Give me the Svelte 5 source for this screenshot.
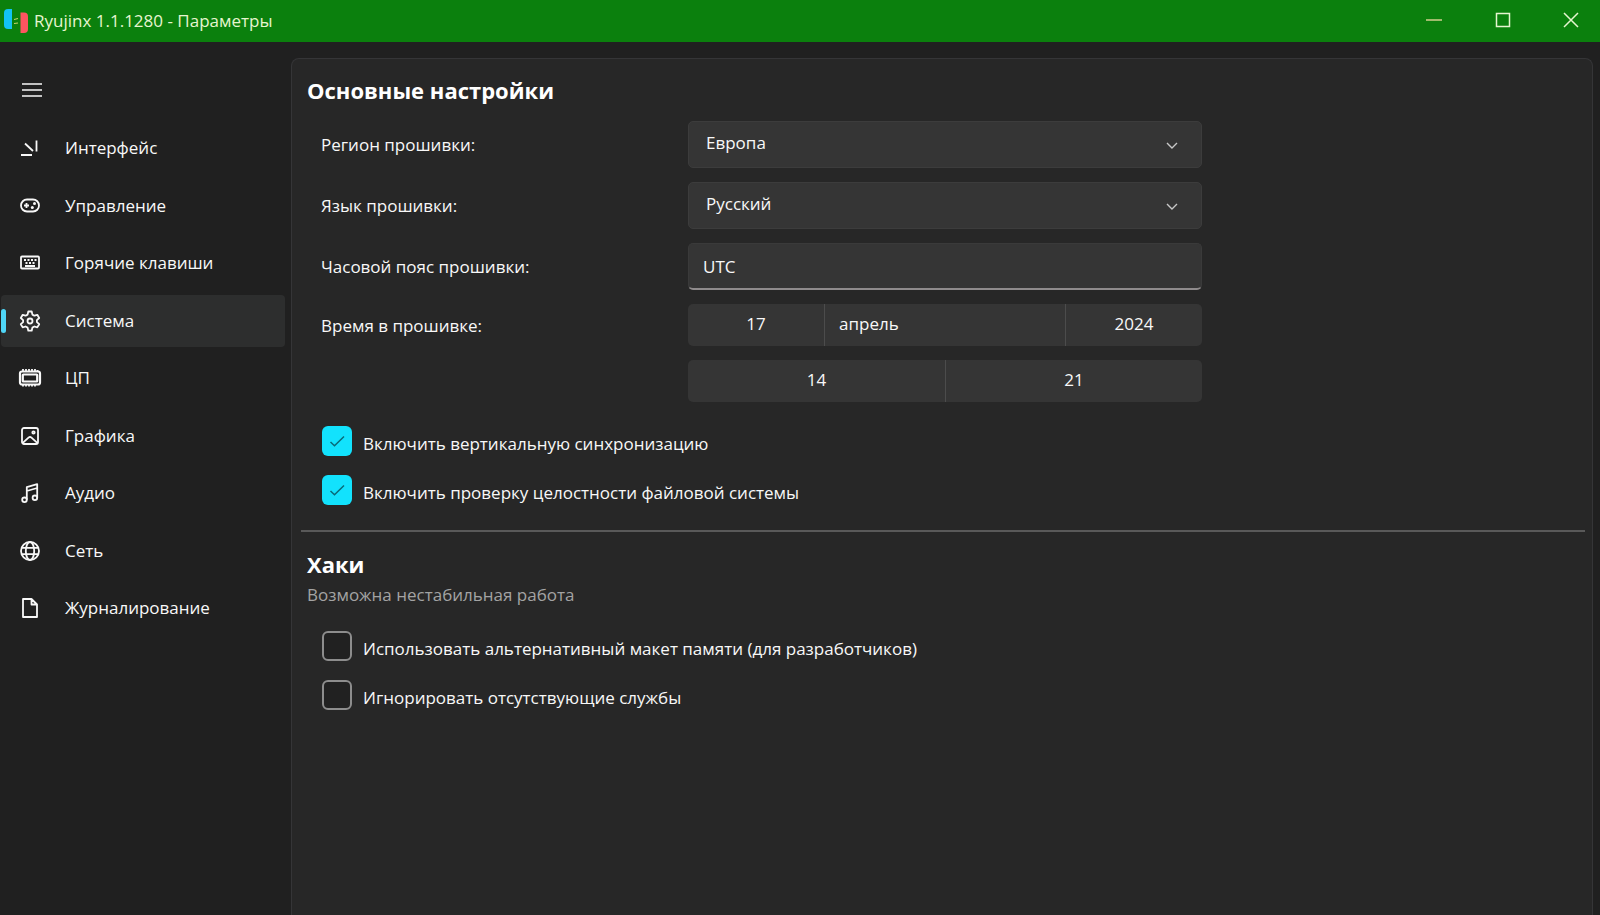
<script>
  const sections = [
    { id: 'ui', label: 'Интерфейс' },
    { id: 'input', label: 'Управление' },
    { id: 'hotkeys', label: 'Горячие клавиши' },
    { id: 'system', label: 'Система' },
    { id: 'cpu', label: 'ЦП' },
    { id: 'graphics', label: 'Графика' },
    { id: 'audio', label: 'Аудио' },
    { id: 'network', label: 'Сеть' },
    { id: 'logging', label: 'Журналирование' }
  ];
  let current = $state('system');
  let region = $state('Европа');
  let language = $state('Русский');
  let timezone = $state('UTC');

  const general = $state([
    { label: 'Включить вертикальную синхронизацию', on: true },
    { label: 'Включить проверку целостности файловой системы', on: true }
  ]);
  const hacks = $state([
    { label: 'Использовать альтернативный макет памяти (для разработчиков)', on: false },
    { label: 'Игнорировать отсутствующие службы', on: false }
  ]);
</script>

{#snippet icon(id)}
  <svg class="icon" viewBox="0 0 24 24" aria-hidden="true">
    {#if id === 'ui'}
      <path d="M3 19h11M7 7.5l8 7.5M18.500 4.500v11" />
    {:else if id === 'input'}
      <rect x="3" y="5.500" width="18" height="12" rx="6" />
      <path d="M8.500 9v5M6 11.500h5" />
      <circle class="solid" cx="16.500" cy="9.500" r="1.500" />
      <circle class="solid" cx="14.300" cy="13.500" r="1.500" />
    {:else if id === 'hotkeys'}
      <rect x="3" y="5.500" width="18" height="12" rx="1" />
      <path d="M6 9h2M9.500 9h2M13 9h2M16.500 9h2M7.500 12h2M11 12h2M14.500 12h2M7 15h10" />
    {:else if id === 'system'}
      <path d="M10.300 2.500h3.400l.7 3.100 2 1.100 2.900-.9 1.900 3.200-2.300 2.100v2l2.300 2.100-1.900 3.200-2.900-.9-2 1.100-.7 3.100h-3.400l-.7-3.100-2-1.100-2.900.9-1.900-3.200 2.300-2.100v-2L2.800 9l1.900-3.200 2.900.9 2-1.100z" />
      <circle cx="12" cy="12" r="2.500" />
    {:else if id === 'cpu'}
      <path d="M5 3v3M8 3v3M11 3v3M14 3v3M17 3v3M19.500 4v2M5 18v2.500M8 18v2.500M11 18v2.500M14 18v2.500M17 18v2.500" />
      <rect class="thick" x="2" y="5.500" width="20" height="13" rx="2" />
      <rect class="thick" x="4.800" y="8.500" width="14.400" height="7" rx="0.500" />
    {:else if id === 'graphics'}
      <rect x="4" y="4" width="16" height="16" rx="2" />
      <path d="M4.500 19.200l6-5.600q1.500-1.200 3 0l6 5.600" />
      <circle cx="15.500" cy="8.500" r="1.200" />
    {:else if id === 'audio'}
      <path d="M8.800 18.800V6.200L19.200 3.200v13.600M8.800 10l10.400-3" />
      <circle cx="6.500" cy="18.800" r="2.300" />
      <circle cx="16.900" cy="16.800" r="2.300" />
    {:else if id === 'network'}
      <circle cx="12" cy="12" r="9" />
      <ellipse cx="12" cy="12" rx="4.200" ry="9" />
      <path d="M3.800 8.800h16.400M3.800 15.200h16.400" />
    {:else}
      <path d="M5 3h8.500L19 8.500V21H5zM13.500 3v5.500H19" />
    {/if}
  </svg>
{/snippet}

{#snippet checks(items)}
  <div class="checks">
    {#each items as item}
      <label class="check">
        <span class="tick">
          <input type="checkbox" bind:checked={item.on} />
          {#if item.on}
            <svg viewBox="0 0 30 30" aria-hidden="true"><path d="M8.500 16l4 3.800 9.500-9.300" /></svg>
          {/if}
        </span>
        <span class="text">{item.label}</span>
      </label>
    {/each}
  </div>
{/snippet}

<div class="window">
  <header>
    <svg class="logo" viewBox="0 0 24 24" aria-hidden="true">
      <path fill="#12c3f4" d="M8 0v20H4q-4 0-4-4V4q0-4 4-4z" />
      <path fill="#ff5560" d="M16.500 3.500H20q4 0 4 4V20q0 4-4 4h-3.500z" />
      <path stroke="#c9d36a" stroke-width="1.200" d="M10 10.500l4-1M10 14.500l4-.5" />
    </svg>
    <span class="title">Ryujinx 1.1.1280 - Параметры</span>
    <div class="controls">
      <button class="minimize" aria-label="Свернуть"><svg viewBox="0 0 16 16"><path d="M0 8h16" /></svg></button>
      <button aria-label="Развернуть"><svg viewBox="0 0 16 16"><path d="M1.500 1.500h13v13h-13z" /></svg></button>
      <button aria-label="Закрыть"><svg viewBox="0 0 16 16"><path d="M1 1l14 14M15 1L1 15" /></svg></button>
    </div>
  </header>

  <div class="body">
    <aside>
      <button class="menu" aria-label="Меню">
        <svg viewBox="0 0 22 16"><path d="M1 2h20M1 8h20M1 14h20" /></svg>
      </button>
      <nav>
        {#each sections as s}
          <button class="item" class:active={s.id === current} onclick={() => (current = s.id)}>
            {@render icon(s.id)}
            <span>{s.label}</span>
          </button>
        {/each}
      </nav>
    </aside>

    <main>
      <section>
        <h2>Основные настройки</h2>
        <div class="form">
          <label for="region">Регион прошивки:</label>
          <div class="combo">
            <select id="region" bind:value={region}><option>Европа</option></select>
            <svg viewBox="0 0 12 8" aria-hidden="true"><path d="M1 1l5 5 5-5" /></svg>
          </div>
          <label for="language">Язык прошивки:</label>
          <div class="combo">
            <select id="language" bind:value={language}><option>Русский</option></select>
            <svg viewBox="0 0 12 8" aria-hidden="true"><path d="M1 1l5 5 5-5" /></svg>
          </div>
          <label for="timezone">Часовой пояс прошивки:</label>
          <input id="timezone" type="text" bind:value={timezone} />
          <span class="label" id="time">Время в прошивке:</span>
          <div class="pickers" role="group" aria-labelledby="time">
            <div class="picker date">
              <button>17</button>
              <button class="month">апрель</button>
              <button>2024</button>
            </div>
            <div class="picker clock">
              <button>14</button>
              <button>21</button>
            </div>
          </div>
        </div>
        {@render checks(general)}
      </section>
      <hr />
      <section>
        <h2>Хаки</h2>
        <p>Возможна нестабильная работа</p>
        {@render checks(hacks)}
      </section>
    </main>
  </div>
</div>

<style>
  :global(body) {
    margin: 0;
    background: #202020;
  }
  .window {
    display: flex;
    flex-direction: column;
    min-height: 100vh;
    color: #f8f8f8;
    background: #202020;
    font: 17px/24px 'Open Sans', 'Noto Sans', sans-serif;
  }
  button,
  select,
  input {
    margin: 0;
    border: 0;
    color: inherit;
    font: inherit;
    background: none;
  }
  svg {
    fill: none;
    stroke: currentColor;
  }
  header {
    display: flex;
    align-items: center;
    height: 42px;
    padding-left: 4px;
    background: #0b800d;
    color: #e6f5cf;
  }
  .logo {
    width: 24px;
    height: 24px;
    margin-right: 6px;
    stroke: none;
  }
  .title {
    flex: 1;
  }
  .controls {
    display: flex;
    height: 100%;
  }
  .controls button {
    display: grid;
    place-items: center;
    width: 69px;
    padding: 0 0 2px;
  }
  .controls button:last-child {
    width: 63px;
    padding-left: 5px;
  }
  .controls .minimize {
    color: #d3cf8e;
  }
  .controls svg {
    width: 16px;
    height: 16px;
    stroke-width: 1.5;
  }
  .body {
    flex: 1;
    display: flex;
  }
  aside {
    width: 284px;
    flex: none;
    padding: 23px 6px 0 1px;
  }
  .menu {
    display: block;
    padding: 16px 20px;
    height: 50px;
  }
  .menu svg {
    display: block;
    width: 22px;
    height: 16px;
    stroke-width: 1.5;
  }
  nav {
    display: flex;
    flex-direction: column;
    justify-content: space-between;
    height: 512px;
    margin-top: 7px;
  }
  .item {
    position: relative;
    display: flex;
    align-items: center;
    gap: 23px;
    height: 52px;
    padding: 0 17px;
    border-radius: 4px;
    text-align: left;
  }
  .item.active {
    background: #2d2e2e;
  }
  .item.active::before {
    content: '';
    position: absolute;
    left: 0;
    top: 14px;
    width: 5px;
    height: 24px;
    border-radius: 3px;
    background: #4fd6f7;
  }
  .icon {
    width: 24px;
    height: 24px;
    stroke-width: 1.8;
    stroke-linejoin: round;
  }
  .icon .thick {
    stroke-width: 2.2;
  }
  .icon .solid {
    fill: currentColor;
    stroke: none;
  }
  main {
    flex: 1;
    min-width: 0;
    box-sizing: border-box;
    margin: 16px 7px 0 0;
    padding: 15px 7px 0 9px;
    border: 1px solid #353537;
    border-bottom: 0;
    border-radius: 8px 8px 0 0;
    background: #272727;
  }
  h2 {
    margin: 0;
    font-size: 22px;
    line-height: 32px;
    font-weight: 700;
    color: #fff;
  }
  section {
    padding: 0 6px;
  }
  .form {
    display: grid;
    grid-template-columns: 353px minmax(0, 514px);
    gap: 14px;
    margin: 15px 0 0 14px;
  }
  .form label,
  .form .label {
    align-self: start;
    margin-right: 8px;
    padding-top: 12px;
  }
  .form .label {
    padding-top: 10px;
  }
  .combo {
    position: relative;
    display: flex;
  }
  .combo select {
    flex: 1;
    appearance: none;
    height: 47px;
    padding: 0 40px 4px 17px;
    border: 1px solid #3c3c3c;
    border-radius: 5px;
    background: #353535;
  }
  .combo svg {
    position: absolute;
    right: 24px;
    top: 21px;
    width: 12px;
    height: 8px;
    stroke-width: 1.4;
    stroke: #c8c8c8;
    pointer-events: none;
  }
  input[type='text'] {
    box-sizing: border-box;
    height: 47px;
    padding: 0 14px;
    border: 1px solid #3a3a3a;
    border-bottom: 2px solid #8f8b8c;
    border-radius: 5px;
    background: #353535;
  }
  .pickers {
    display: grid;
    gap: 14px;
  }
  .picker {
    display: grid;
    height: 42px;
    border-radius: 5px;
    background: #353535;
    overflow: hidden;
  }
  .date {
    grid-template-columns: 136fr 241fr 137fr;
  }
  .clock {
    grid-template-columns: 1fr 1fr;
  }
  .picker button {
    padding: 0 0 2px;
  }
  .picker button + button {
    border-left: 1px solid #4c4c4c;
  }
  .picker .month {
    padding-left: 14px;
    text-align: left;
  }
  .checks {
    display: grid;
    gap: 19px;
    margin: 24px 0 0 15px;
  }
  .check {
    display: flex;
    gap: 11px;
    width: max-content;
    height: 30px;
  }
  .check .text {
    padding-top: 6px;
  }
  .tick {
    display: grid;
    width: 30px;
    height: 30px;
  }
  .tick input,
  .tick svg {
    grid-area: 1 / 1;
    width: 30px;
    height: 30px;
  }
  .tick svg {
    stroke: #0a6a78;
    stroke-width: 1.5;
    pointer-events: none;
  }
  .tick input {
    appearance: none;
    box-sizing: border-box;
    border: 2px solid #8d8d8d;
    border-radius: 6px;
    background: #212121;
  }
  .tick input:checked {
    border: 0;
    background: #12e2fd;
  }
  hr {
    height: 2px;
    margin: 25px 0 16px;
    border: 0;
    background: #595959;
  }
  p {
    margin: 3px 0 0;
    color: #a3a3a3;
  }
</style>
